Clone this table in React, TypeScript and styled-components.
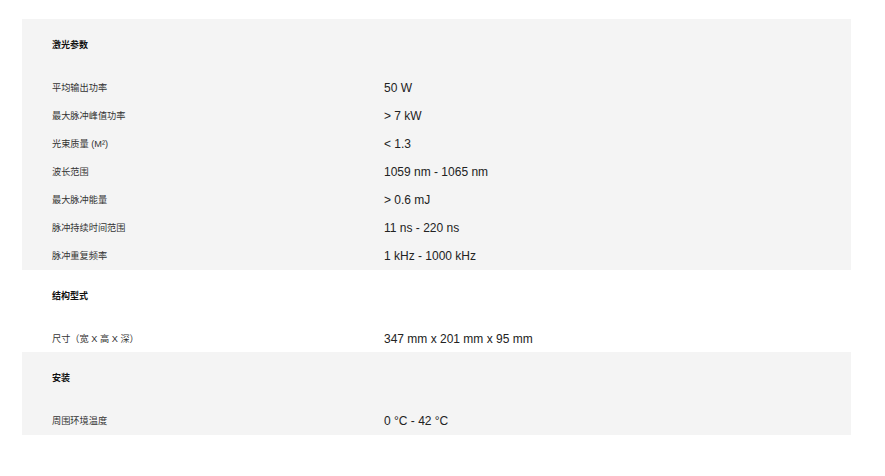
import React from 'react';
import styled, { createGlobalStyle } from 'styled-components';

interface Spec {
  label: string;
  value: string;
}

interface Group {
  title: string;
  specs: Spec[];
}

const groups: Group[] = [
  {
    title: '激光参数',
    specs: [
      { label: '平均输出功率', value: '50 W' },
      { label: '最大脉冲峰值功率', value: '> 7 kW' },
      { label: '光束质量 (M²)', value: '< 1.3' },
      { label: '波长范围', value: '1059 nm - 1065 nm' },
      { label: '最大脉冲能量', value: '> 0.6 mJ' },
      { label: '脉冲持续时间范围', value: '11 ns - 220 ns' },
      { label: '脉冲重复频率', value: '1 kHz - 1000 kHz' },
    ],
  },
  {
    title: '结构型式',
    specs: [{ label: '尺寸（宽 X 高 X 深）', value: '347 mm x 201 mm x 95 mm' }],
  },
  {
    title: '安装',
    specs: [{ label: '周围环境温度', value: '0 °C - 42 °C' }],
  },
];

const GlobalStyle = createGlobalStyle`
  body {
    margin: 0;
    background: #fff;
    font-family: 'Liberation Sans', Arial, 'Noto Sans CJK SC', sans-serif;
  }
`;

const Page = styled.div`
  padding: 19px 34px 0 22px;
  width: 829px;
`;

const Section = styled.section<{ shaded: boolean }>`
  background: ${(p) => (p.shaded ? '#f4f4f4' : '#fff')};
  padding: 12px 0 0.5px 30px;
`;

const Title = styled.h3`
  margin: 0 0 14px;
  height: 28px;
  line-height: 28px;
  font-size: 9px;
  font-weight: bold;
  color: #111;
  font-family: 'Noto Sans CJK SC', sans-serif;
`;

const Row = styled.div`
  display: grid;
  grid-template-columns: 332px 1fr;
  align-items: center;
  height: 28px;
`;

const Label = styled.span`
  font-size: 9.2px;
  color: #333;
  font-family: 'Liberation Sans', 'Noto Sans CJK SC', sans-serif;
`;

const Value = styled.span`
  padding-top: 2px;
  font-size: 12px;
  color: #222;
  font-family: 'Liberation Sans', Arial, sans-serif;
`;

export default function App() {
  return (
    <>
      <GlobalStyle />
      <Page>
        {groups.map((g, i) => (
          <Section key={g.title} shaded={i % 2 === 0}>
            <Title>{g.title}</Title>
            {g.specs.map((s) => (
              <Row key={s.label}>
                <Label>{s.label}</Label>
                <Value>{s.value}</Value>
              </Row>
            ))}
          </Section>
        ))}
      </Page>
    </>
  );
}
